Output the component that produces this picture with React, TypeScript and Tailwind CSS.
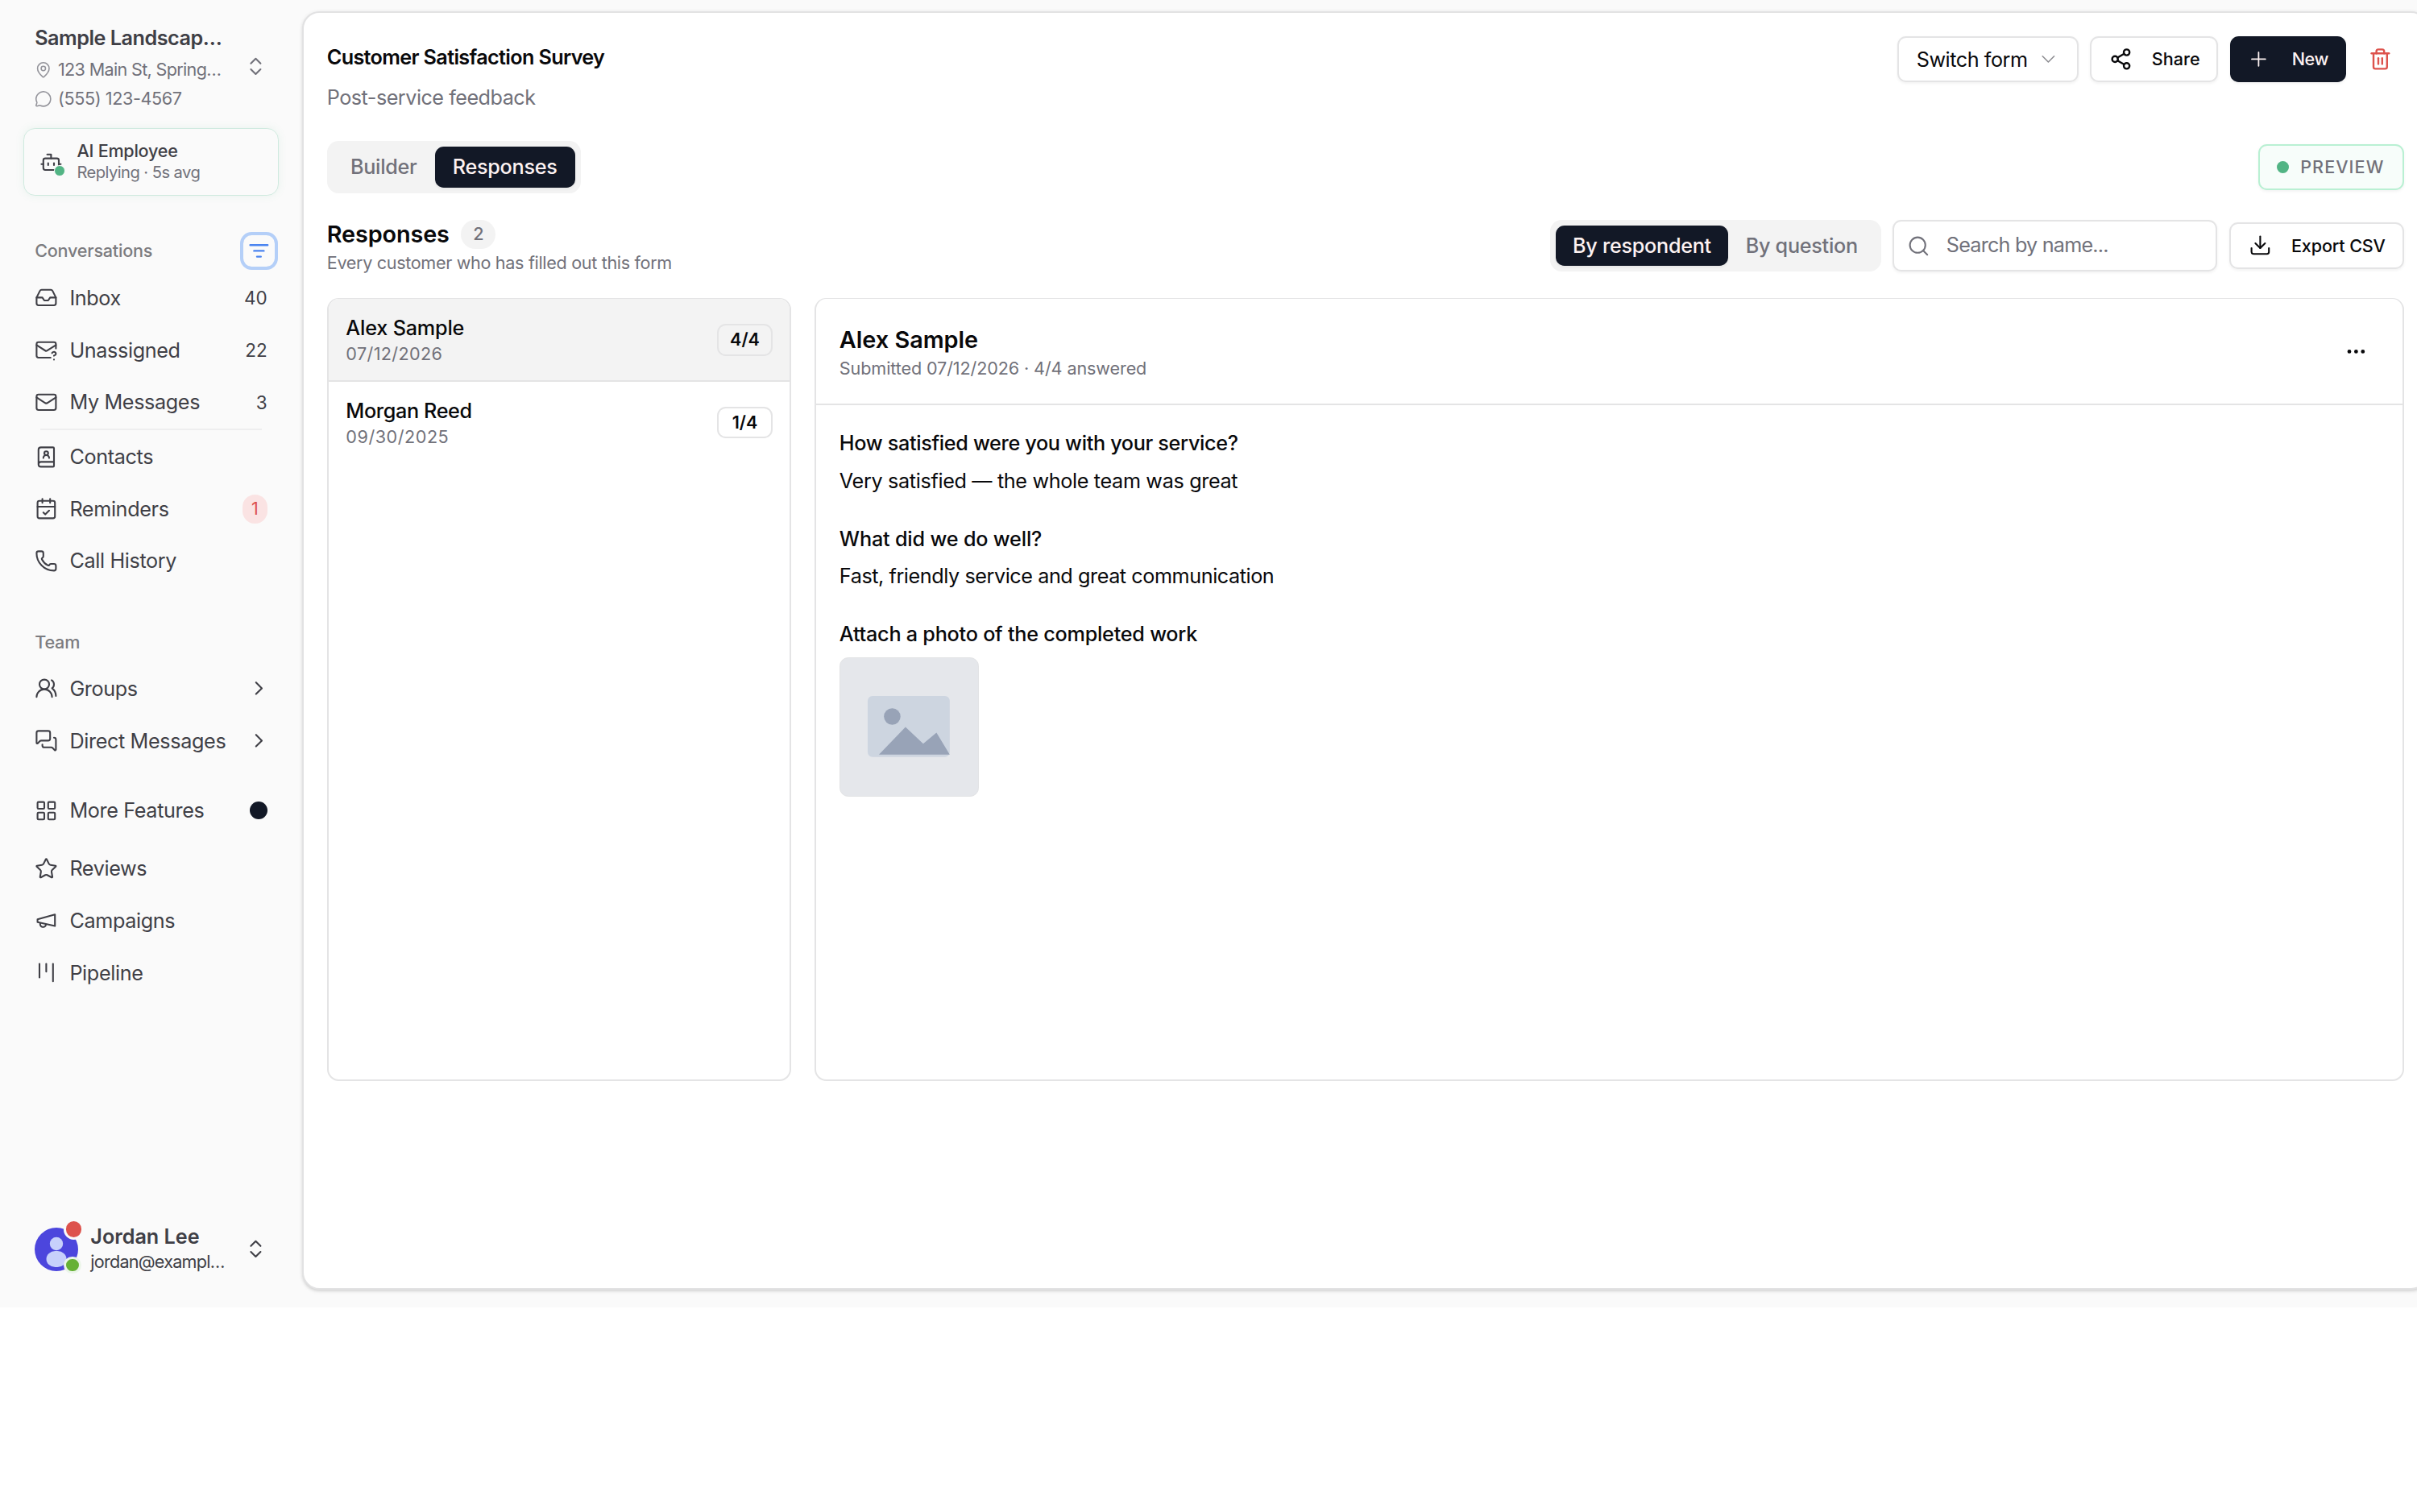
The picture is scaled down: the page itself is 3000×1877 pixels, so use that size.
import React from "react";
import { useState } from "react";
import {
  Bot,
  BookUser,
  CalendarCheck,
  ChevronDown,
  ChevronRight,
  ChevronsUpDown,
  Download,
  Ellipsis,
  Inbox,
  Kanban,
  LayoutGrid,
  Mail,
  MapPin,
  MessageCircle,
  MessagesSquare,
  Phone,
  Plus,
  Search,
  Share2,
  Star,
  Trash2,
  UsersRound,
} from "lucide-react";

type NavItemProps = {
  icon: React.ReactNode;
  label: string;
  children?: React.ReactNode;
};

type Response = {
  name: string;
  nameClass: string;
  date: string;
  dateClass: string;
  answered: string;
};

const responses: Response[] = [
  { name: "Alex Sample", nameClass: "tracking-[-0.1px]", date: "07/12/2026", dateClass: "tracking-[0.21px]", answered: "4/4" },
  { name: "Morgan Reed", nameClass: "tracking-[-0.2px]", date: "09/30/2025", dateClass: "tracking-[0.3px]", answered: "1/4" },
];

function MailQuestionIcon() {
  return (
    <svg className="size-4" viewBox="0 0 24 24" fill="none" stroke="currentColor" strokeWidth="1.75" strokeLinecap="round" strokeLinejoin="round">
      <path d="M22 10.5V6a2 2 0 0 0-2-2H4a2 2 0 0 0-2 2v12c0 1.1.9 2 2 2h12.5" />
      <path d="m22 7-8.97 5.7a1.94 1.94 0 0 1-2.06 0L2 7" />
      <path d="M18 15.28c.2-.4.5-.8.9-1a2.1 2.1 0 0 1 2.6.4c.3.4.5.8.5 1.3 0 1.3-2 2-2 2" />
      <path d="M20 22v.01" />
    </svg>
  );
}

function MegaphoneIcon() {
  return (
    <svg className="size-4" viewBox="0 0 24 24" fill="none" stroke="currentColor" strokeWidth="1.75" strokeLinecap="round" strokeLinejoin="round">
      <path d="m3 11 18-5v12L3 14v-3z" />
      <path d="M11.6 16.8a3 3 0 1 1-5.8-1.6" />
    </svg>
  );
}

function FilterIcon() {
  return (
    <svg className="size-4" viewBox="0 0 24 24" fill="none" stroke="currentColor" strokeWidth="2" strokeLinecap="round">
      <path d="M3 6h18M7 12h10M10 18h4" />
    </svg>
  );
}

function Avatar() {
  return (
    <div className="relative size-[30px] shrink-0">
      <svg className="size-full" viewBox="0 0 54 54">
        <circle cx="27" cy="27" r="27" fill="#4c46dd" />
        <circle cx="27" cy="20" r="8.2" fill="#c7d0fb" />
        <rect x="14.5" y="29" width="25" height="20" rx="11" fill="#c7d0fb" />
      </svg>
      <span className="absolute -top-[5.7px] left-[20px] size-[14px] rounded-full border-2 border-[#fafafa] bg-[#dd524c]" />
      <span className="absolute top-[20px] left-[20px] size-[12px] rounded-full border-2 border-[#ebf5e9] bg-[#66b135]" />
    </div>
  );
}

function NavItem({ icon, label, children }: NavItemProps) {
  return (
    <a className="flex h-9 items-center gap-2 pr-6 pl-6">
      {icon}
      <span className="flex-1 whitespace-nowrap text-sm tracking-[-0.2px]">{label}</span>
      {children}
    </a>
  );
}

function Sidebar() {
  return (
    <aside className="flex w-[208.3px] shrink-0 flex-col pt-4 text-[#3f3f46]">
      <div className="flex items-center pr-6 pl-6">
        <div className="flex flex-1 flex-col gap-1">
          <div className="whitespace-nowrap text-sm/5 font-semibold tracking-[-0.27px]">Sample Landscap…</div>
          <div className="flex items-center gap-1 text-xs/4 text-[#71717a]">
            <MapPin className="size-3 text-[#94949b]" strokeWidth={1.75} />
            <span className="whitespace-nowrap tracking-[-0.37px]">123 Main St, Spring…</span>
          </div>
          <div className="flex items-center gap-1 text-xs/4 text-[#71717a]">
            <MessageCircle className="size-3 text-[#94949b]" strokeWidth={1.75} />
            <span className="whitespace-nowrap tracking-[-0.21px]">(555) 123-4567</span>
          </div>
        </div>
        <ChevronsUpDown className="size-4 shrink-0 text-[#71717a]" strokeWidth={1.75} />
      </div>

      <div className="mt-[12.3px] mr-4 ml-4 flex h-[47px] items-center gap-2.5 rounded-lg border border-[#cfeadf] pl-[10.5px] shadow-[0_0_6px_rgba(82,180,132,0.1)]">
        <div className="relative">
          <Bot className="size-4" strokeWidth={1.75} />
          <span className="absolute top-[10px] left-[10px] size-2 rounded-full border border-[#fafafa] bg-[#52b484]" />
        </div>
        <div className="whitespace-nowrap">
          <div className="text-xs/[14.4px] font-medium tracking-[-0.14px]">AI Employee</div>
          <div className="text-[11.2px]/[14.4px] tracking-[-0.31px] text-[#71717a]">Replying · 5s avg</div>
        </div>
      </div>

      <div className="mt-[24.8px] flex h-[26px] items-center justify-between pr-[16.9px] pl-6">
        <span className="text-xs font-medium tracking-[-0.12px] text-[#7c7c80]">Conversations</span>
        <button className="flex size-[26px] items-center justify-center rounded-lg border-[2.3px] border-[#b4cff8] text-[#4a84f0]">
          <FilterIcon />
        </button>
      </div>

      <nav className="mt-[1.4px]">
        <NavItem icon={<Inbox className="size-4" strokeWidth={1.75} />} label="Inbox">
          <span className="text-[12.500px]">40</span>
        </NavItem>
        <NavItem icon={<MailQuestionIcon />} label="Unassigned">
          <span className="text-[12.500px]">22</span>
        </NavItem>
        <NavItem icon={<Mail className="size-4" strokeWidth={1.75} />} label="My Messages">
          <span className="text-[12.500px]">3</span>
        </NavItem>
        <div className="mr-7 mb-[0.3px] ml-7 h-[1.2px] bg-[#eeeeef]" />
        <NavItem icon={<BookUser className="size-4" strokeWidth={1.75} />} label="Contacts" />
        <NavItem icon={<CalendarCheck className="size-4" strokeWidth={1.75} />} label="Reminders">
          <span className="flex h-5 w-[17.2px] items-center justify-center rounded-full bg-[#fae3e3] text-xs text-[#dc4f4b]">1</span>
        </NavItem>
        <NavItem icon={<Phone className="size-4" strokeWidth={1.75} />} label="Call History" />
      </nav>

      <div className="mt-[29.8px] pl-6 text-xs/4 font-medium tracking-[-0.1px] text-[#7c7c80]">Team</div>
      <nav className="mt-[6.2px]">
        <NavItem icon={<UsersRound className="size-4" strokeWidth={1.75} />} label="Groups">
          <ChevronRight className="-mr-0.5 size-4" strokeWidth={1.75} />
        </NavItem>
        <NavItem icon={<MessagesSquare className="size-4" strokeWidth={1.75} />} label="Direct Messages">
          <ChevronRight className="-mr-0.5 size-4" strokeWidth={1.75} />
        </NavItem>
      </nav>
      <nav className="mt-3">
        <NavItem icon={<LayoutGrid className="size-4" strokeWidth={1.75} />} label="More Features">
          <span className="size-3 rounded-full bg-[#121826]" />
        </NavItem>
        <div className="h-1" />
        <NavItem icon={<Star className="size-4" strokeWidth={1.75} />} label="Reviews" />
        <NavItem icon={<MegaphoneIcon />} label="Campaigns" />
        <NavItem icon={<Kanban className="size-4" strokeWidth={1.75} />} label="Pipeline" />
      </nav>

      <div className="mt-auto mb-[23.5px] flex items-center pr-6 pl-6">
        <Avatar />
        <div className="flex-1 pl-[8.4px] whitespace-nowrap">
          <div className="text-sm/[17.5px] font-semibold">Jordan Lee</div>
          <div className="text-xs/4 tracking-[-0.42px]">jordan@exampl…</div>
        </div>
        <ChevronsUpDown className="size-4 shrink-0" strokeWidth={1.75} />
      </div>
    </aside>
  );
}

function Header() {
  return (
    <div className="flex items-start justify-between">
      <div className="flex flex-col gap-2 pt-[4.3px]">
        <h1 className="text-sm/5 font-semibold tracking-[-0.36px]">Customer Satisfaction Survey</h1>
        <p className="text-sm/5 tracking-[-0.28px] text-[#71717a]">Post-service feedback</p>
      </div>
      <div className="flex gap-2">
        <button className="flex h-8 w-[125px] items-center justify-between rounded-md border-[1.2px] border-[#e4e4e5] pr-[11.500px] pl-[12.3px] text-sm tracking-[-0.25px] shadow-xs">
          Switch form
          <ChevronDown className="size-4 text-[#8a8a8f]" strokeWidth={1.25} />
        </button>
        <button className="flex h-8 w-[88.500px] items-center justify-between rounded-md border-[1.2px] border-[#e4e4e5] pr-[11.500px] pl-3 text-xs font-medium shadow-xs">
          <Share2 className="size-4" />
          Share
        </button>
        <button className="flex h-8 w-20 items-center justify-between rounded-md bg-[#121826] px-3 text-xs font-medium tracking-[-0.2px] text-[#fdf2f2] shadow-xs">
          <Plus className="size-4" strokeWidth={1.5} />
          New
        </button>
        <button className="flex size-8 items-center justify-center text-[#dd524c]">
          <Trash2 className="size-4" />
        </button>
      </div>
    </div>
  );
}

function ResponseList() {
  return (
    <div className="w-[320.3px] shrink-0 overflow-hidden rounded-lg border-[1.2px] border-t border-[#e4e4e5]">
      {responses.map((response, index) => (
        <div
          key={response.name}
          className={
            index === 0
              ? "flex items-center justify-between border-b-[1.2px] border-[#e4e4e5] bg-[#f3f3f3] px-3 pt-[10.4px] pb-2.5"
              : "flex items-center justify-between px-3 py-2.5"
          }
        >
          <div>
            <div className={`text-sm/5 font-medium ${response.nameClass}`}>{response.name}</div>
            <div className={`text-xs/4 text-[#71717a] ${response.dateClass}`}>{response.date}</div>
          </div>
          <span className="flex h-[22px] w-[38px] items-center justify-center rounded-md border-[1.2px] border-[#e4e4e5] text-xs font-semibold">
            {response.answered}
          </span>
        </div>
      ))}
    </div>
  );
}

function ResponseDetail() {
  return (
    <div className="flex-1 rounded-lg border-[1.2px] border-t border-[#e4e4e5]">
      <div className="flex items-center justify-between border-b-[1.2px] border-[#e4e4e5] px-4 pt-[16.4px] pb-4">
        <div>
          <h3 className="text-base/6 font-semibold">Alex Sample</h3>
          <p className="text-xs/4 tracking-[-0.06px] text-[#71717a]">Submitted 07/12/2026 · 4/4 answered</p>
        </div>
        <button className="flex size-8 items-center justify-center">
          <Ellipsis className="size-4" />
        </button>
      </div>
      <div className="flex flex-col gap-5 p-4 text-sm/5">
        <div className="flex flex-col gap-1.5">
          <div className="font-medium tracking-[-0.18px]">How satisfied were you with your service?</div>
          <div className="tracking-[-0.19px]">Very satisfied — the whole team was great</div>
        </div>
        <div className="flex flex-col gap-1.5">
          <div className="font-medium tracking-[-0.1px]">What did we do well?</div>
          <div className="tracking-[-0.24px]">Fast, friendly service and great communication</div>
        </div>
        <div className="flex flex-col gap-1.5">
          <div className="font-medium tracking-[-0.13px]">Attach a photo of the completed work</div>
          <div className="size-24 overflow-hidden rounded-md border border-[#e2e3e5] bg-[#e5e7eb]">
            <svg className="size-full" viewBox="0 0 171 171">
              <rect x="34" y="47" width="102" height="76" rx="6" fill="#cdd5e0" />
              <circle cx="64.5" cy="72.5" r="10.3" fill="#98a3b7" />
              <path d="M48 120 L81 85.500 L103 106.500 L119.500 92.500 L136 120 Z" fill="#98a3b7" />
            </svg>
          </div>
        </div>
      </div>
    </div>
  );
}

function App() {
  const [search, setSearch] = useState<string>("");

  return (
    <div className="h-[1042.700px] w-full overflow-hidden bg-white font-['Inter',sans-serif] text-[#09090b] antialiased [zoom:1.8]">
      <div className="flex h-[901.7px] overflow-hidden bg-[#fafafa]">
        <Sidebar />
        <main className="mt-[7.8px] mb-3 w-[1466.4px] shrink-0 rounded-xl border-[1.2px] border-[#e2e2e3] bg-white p-4 shadow-sm">
          <Header />

          <div className="mt-5 flex items-center justify-between">
            <div className="flex h-9 rounded-lg bg-[#f3f3f3] p-1 text-sm font-medium tracking-[-0.15px]">
              <button className="w-[70.4px] text-[#71717a]">Builder</button>
              <button className="w-[96.7px] rounded-md bg-[#121826] text-[#fdf2f2] shadow-xs">Responses</button>
            </div>
            <div className="flex h-8 w-[100.500px] items-center gap-2 rounded-md border-[1.2px] border-[#b9f0d3] bg-[#f7fdfa] px-3 text-xs font-medium tracking-[0.6px] text-[#71717a] shadow-xs">
              <span className="size-2 rounded-full bg-[#52b484]" />
              PREVIEW
            </div>
          </div>

          <div className="mt-[18.2px] flex items-start justify-between">
            <div>
              <div className="flex h-5 items-center gap-2">
                <h2 className="text-base font-semibold tracking-[-0.06px]">Responses</h2>
                <span className="flex h-5 w-6 items-center justify-center rounded-full bg-[#f3f3f3] text-xs font-medium text-[#71717a]">2</span>
              </div>
              <p className="mt-0.5 text-xs/4 tracking-[-0.18px] text-[#71717a]">Every customer who has filled out this form</p>
            </div>
            <div className="flex items-center gap-2">
              <div className="flex h-9 rounded-lg bg-[#f3f3f3] p-1 text-sm font-medium tracking-[-0.15px]">
                <button className="w-[119px] rounded-md bg-[#121826] text-[#fdf2f2] shadow-xs">By respondent</button>
                <button className="w-[101.3px] text-[#71717a]">By question</button>
              </div>
              <div className="flex h-9 w-56 items-center gap-[11px] rounded-md border-[1.2px] border-[#e4e4e5] pl-[9px] shadow-xs">
                <Search className="size-4 shrink-0 text-[#71717a]" strokeWidth={1.75} />
                <input
                  type="text"
                  value={search}
                  onChange={(e) => setSearch(e.target.value)}
                  placeholder="Search by name..."
                  className="w-full text-sm tracking-[-0.44px] outline-none placeholder:text-[#71717a]"
                />
              </div>
              <button className="flex h-8 w-[120.6px] items-center justify-between rounded-md border-[1.2px] border-[#e4e4e5] pr-[11.6px] pl-[12.3px] text-xs font-medium tracking-[-0.08px] shadow-xs">
                <Download className="size-4" strokeWidth={1.75} />
                Export CSV
              </button>
            </div>
          </div>

          <div className="mt-4 flex h-[540.2px] gap-4">
            <ResponseList />
            <ResponseDetail />
          </div>
        </main>
      </div>
    </div>
  );
}

export default App;
